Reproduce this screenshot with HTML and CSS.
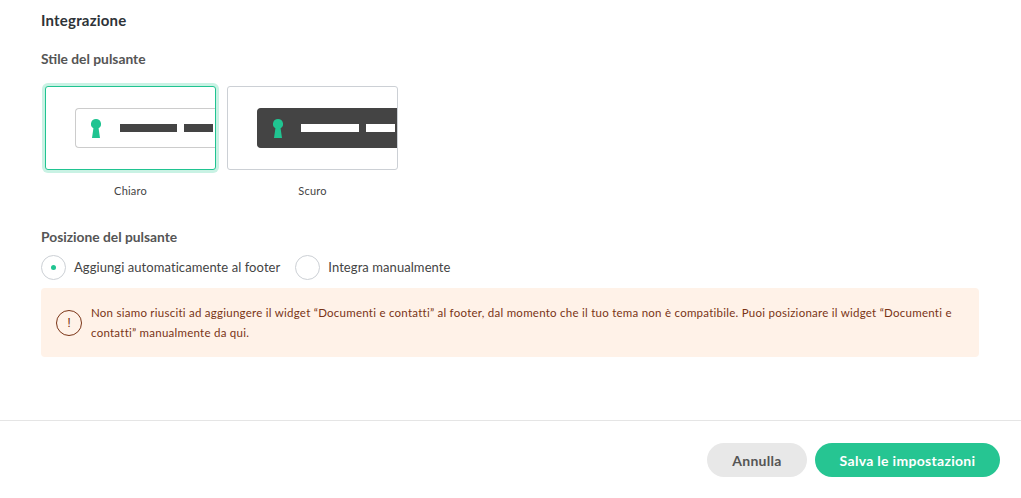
FILE: index.html
```html
<!DOCTYPE html>
<html lang="it">
<head>
    <meta charset="UTF-8" />
    <title>Integrazione</title>
    <link rel="stylesheet" href="styles.css">
</head>
<body>
    <div class="content">
        <h2 class="title">Integrazione</h2>
        <h3 class="label">Stile del pulsante</h3>
        <div class="styles">
            <div class="style-option">
                <div class="card selected">
                    <div class="preview">
                        <svg class="keyhole" width="10" height="19" viewBox="0 0 10 19"><path d="M5 0a5 5 0 0 1 2.6 9.3L9 19H1L2.4 9.3A5 5 0 0 1 5 0z" fill="#20c491"/></svg>
                        <span class="bar long"></span>
                        <span class="bar short"></span>
                    </div>
                </div>
                <div class="caption">Chiaro</div>
            </div>
            <div class="style-option">
                <div class="card">
                    <div class="preview dark">
                        <svg class="keyhole" width="10" height="19" viewBox="0 0 10 19"><path d="M5 0a5 5 0 0 1 2.6 9.3L9 19H1L2.4 9.3A5 5 0 0 1 5 0z" fill="#20c491"/></svg>
                        <span class="bar long"></span>
                        <span class="bar short"></span>
                    </div>
                </div>
                <div class="caption">Scuro</div>
            </div>
        </div>
        <h3 class="label position">Posizione del pulsante</h3>
        <div class="radios">
            <div class="radio checked"></div>
            <span class="radio-text">Aggiungi automaticamente al footer</span>
            <div class="radio"></div>
            <span class="radio-text">Integra manualmente</span>
        </div>
        <div class="alert">
            <div class="alert-icon">!</div>
            <p>Non siamo riusciti ad aggiungere il widget “Documenti e contatti” al footer, dal momento che il tuo tema non è compatibile. Puoi posizionare il widget “Documenti e contatti” manualmente da qui.</p>
        </div>
    </div>
    <div class="footer">
        <button class="btn cancel">Annulla</button>
        <button class="btn save">Salva le impostazioni</button>
    </div>
</body>
</html>
```

FILE: styles.css
```css
* {margin: 0; padding: 0; box-sizing: border-box;}
body {
    font-family: "Lato", "Liberation Sans", sans-serif;
    background: #fff;
    color: #444;
    width: 1021px;
    height: 498px;
    overflow: hidden;
}
.content {
    height: 420px;
    padding: 11px 42px 0 41px;
}
.title {
    font-size: 15px;
    line-height: 18px;
    font-weight: 700;
    color: #2e3338;
    letter-spacing: 0.2px;
}
.label {
    font-size: 13.8px;
    line-height: 16px;
    font-weight: 700;
    color: #555;
    margin-top: 22px;
}
.styles {
    display: flex;
    gap: 11px;
    margin-top: 19px;
    margin-left: 4px;
}
.style-option {width: 171px;}
.card {
    height: 84px;
    border: 1px solid #ccd0d5;
    border-radius: 3px;
    padding: 21px 0 0 29px;
    overflow: hidden;
    background: #fff;
}
.card.selected {
    border-color: #20c491;
    box-shadow: 0 0 0 3px #c9f2e4;
}
.preview {
    height: 40px;
    width: 160px;
    border: 1px solid #ccc;
    border-radius: 4px 0 0 4px;
    display: flex;
    align-items: center;
    padding-left: 15px;
    border-right: 0;
}
.preview.dark {
    background: #444;
    border-color: #444;
}
.keyhole {flex: none;}
.bar {
    display: block;
    height: 8px;
    background: #444;
    flex: none;
}
.dark .bar {background: #fff;}
.bar.long {width: 57px; margin-left: 19px;}
.dark .bar.long {width: 58px; margin-left: 18px;}
.bar.short {width: 29px; margin-left: 7px;}
.caption {
    font-size: 11px;
    line-height: 14px;
    text-align: center;
    margin-top: 14px;
    letter-spacing: 0.2px;
}
.label.position {margin-top: 31px;}
.radios {
    display: flex;
    align-items: center;
    margin-top: 10px;
    height: 25px;
}
.radio {
    width: 25px;
    height: 25px;
    border: 1px solid #ccd0d5;
    border-radius: 50%;
    display: flex;
    align-items: center;
    justify-content: center;
    flex: none;
}
.radio.checked::after {
    content: "";
    width: 5px;
    height: 5px;
    border-radius: 50%;
    background: #20c491;
}
.radio-text {
    font-size: 13px;
    letter-spacing: 0.07px;
    margin-left: 8px;
    margin-right: 15px;
    padding-bottom: 2px;
}
.alert {
    margin-top: 8px;
    height: 69px;
    background: #fff2e8;
    border-radius: 4px;
    display: flex;
    align-items: center;
    padding: 0 20px 0 15px;
    color: #7a3416;
}
.alert-icon {
    width: 26px;
    height: 26px;
    border: 1px solid #7a3416;
    border-radius: 50%;
    display: flex;
    align-items: center;
    justify-content: center;
    font-family: "Liberation Sans", sans-serif;
    font-size: 13px;
    flex: none;
    margin-right: 9px;
}
.alert p {
    font-size: 11.5px;
    line-height: 20px;
    letter-spacing: 0.25px;
}
.footer {
    height: 78px;
    border-top: 1px solid #e5e5e5;
    display: flex;
    justify-content: flex-end;
    gap: 8px;
    padding: 22px 21px 0 0;
}
.btn {
    height: 34px;
    border: 0;
    border-radius: 17px;
    font-family: inherit;
    font-size: 14px;
    font-weight: 700;
    letter-spacing: 0.3px;
}
.cancel {
    width: 100px;
    background: #e8e8e8;
    color: #555;
}
.save {
    width: 185px;
    background: #26c592;
    color: #fff;
}
```
